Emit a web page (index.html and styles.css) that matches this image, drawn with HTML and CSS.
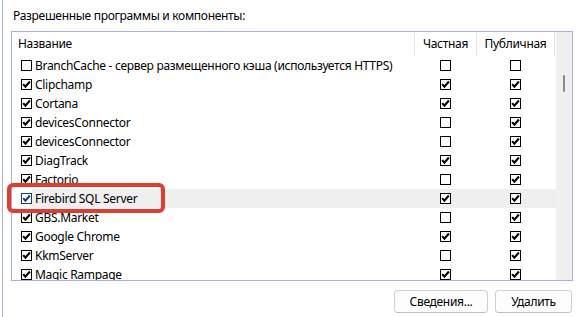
FILE: index.html
```html
<!DOCTYPE html>
<html lang="ru">
<head>
<meta charset="utf-8">
<title>Разрешенные программы</title>
<link rel="stylesheet" href="styles.css">
</head>
<body>
<svg class="defs" width="0" height="0" aria-hidden="true">
  <defs>
    <symbol id="box" viewBox="0 0 11 11">
      <rect x="0.5" y="0.5" width="10" height="10" fill="#fff" stroke="currentColor"/>
    </symbol>
    <symbol id="chk" viewBox="0 0 11 11">
      <rect x="0.5" y="0.5" width="10" height="10" fill="#fff" stroke="currentColor"/>
      <path d="M2.2 5.1 L4.4 7.7 L8.9 2.5" fill="none" stroke="currentColor" stroke-width="2.1" stroke-linejoin="miter"/>
    </symbol>
  </defs>
</svg>
<div class="panel">
  <div class="caption">Разрешенные программы и компоненты:</div>
  <div class="list">
    <div class="table">
      <div class="row head">
        <div class="hcell name">Название</div>
        <div class="hcell">Частная</div>
        <div class="hcell">Публичная</div>
        <div></div>
      </div>

      <div class="row">
        <div class="cell name"><svg class="cb"><use href="#box"/></svg><span class="label">BranchCache - сервер размещенного кэша (используется HTTPS)</span></div>
        <div class="cell mid"><svg class="cb"><use href="#box"/></svg></div>
        <div class="cell mid"><svg class="cb"><use href="#box"/></svg></div>
        <div></div>
      </div>
      <div class="row">
        <div class="cell name"><svg class="cb"><use href="#chk"/></svg><span class="label">Clipchamp</span></div>
        <div class="cell mid"><svg class="cb"><use href="#chk"/></svg></div>
        <div class="cell mid"><svg class="cb"><use href="#chk"/></svg></div>
        <div></div>
      </div>
      <div class="row">
        <div class="cell name"><svg class="cb"><use href="#chk"/></svg><span class="label">Cortana</span></div>
        <div class="cell mid"><svg class="cb"><use href="#chk"/></svg></div>
        <div class="cell mid"><svg class="cb"><use href="#chk"/></svg></div>
        <div></div>
      </div>
      <div class="row">
        <div class="cell name"><svg class="cb"><use href="#chk"/></svg><span class="label">devicesConnector</span></div>
        <div class="cell mid"><svg class="cb"><use href="#box"/></svg></div>
        <div class="cell mid"><svg class="cb"><use href="#chk"/></svg></div>
        <div></div>
      </div>
      <div class="row">
        <div class="cell name"><svg class="cb"><use href="#chk"/></svg><span class="label">devicesConnector</span></div>
        <div class="cell mid"><svg class="cb"><use href="#box"/></svg></div>
        <div class="cell mid"><svg class="cb"><use href="#chk"/></svg></div>
        <div></div>
      </div>
      <div class="row">
        <div class="cell name"><svg class="cb"><use href="#chk"/></svg><span class="label">DiagTrack</span></div>
        <div class="cell mid"><svg class="cb"><use href="#chk"/></svg></div>
        <div class="cell mid"><svg class="cb"><use href="#chk"/></svg></div>
        <div></div>
      </div>
      <div class="row">
        <div class="cell name"><svg class="cb"><use href="#chk"/></svg><span class="label">Factorio</span></div>
        <div class="cell mid"><svg class="cb"><use href="#box"/></svg></div>
        <div class="cell mid"><svg class="cb"><use href="#chk"/></svg></div>
        <div></div>
      </div>
      <div class="row selected">
        <div class="cell name"><svg class="cb focus"><use href="#chk"/></svg><span class="label">Firebird SQL Server</span></div>
        <div class="cell mid"><svg class="cb"><use href="#chk"/></svg></div>
        <div class="cell mid"><svg class="cb"><use href="#chk"/></svg></div>
        <div></div>
      </div>
      <div class="row">
        <div class="cell name"><svg class="cb"><use href="#chk"/></svg><span class="label">GBS.Market</span></div>
        <div class="cell mid"><svg class="cb"><use href="#box"/></svg></div>
        <div class="cell mid"><svg class="cb"><use href="#chk"/></svg></div>
        <div></div>
      </div>
      <div class="row">
        <div class="cell name"><svg class="cb"><use href="#chk"/></svg><span class="label">Google Chrome</span></div>
        <div class="cell mid"><svg class="cb"><use href="#chk"/></svg></div>
        <div class="cell mid"><svg class="cb"><use href="#chk"/></svg></div>
        <div></div>
      </div>
      <div class="row">
        <div class="cell name"><svg class="cb"><use href="#chk"/></svg><span class="label">KkmServer</span></div>
        <div class="cell mid"><svg class="cb"><use href="#box"/></svg></div>
        <div class="cell mid"><svg class="cb"><use href="#chk"/></svg></div>
        <div></div>
      </div>
      <div class="row">
        <div class="cell name"><svg class="cb"><use href="#chk"/></svg><span class="label">Magic Rampage</span></div>
        <div class="cell mid"><svg class="cb"><use href="#chk"/></svg></div>
        <div class="cell mid"><svg class="cb"><use href="#chk"/></svg></div>
        <div></div>
      </div>
    </div>
    <div class="scrollbar"><div class="thumb"></div></div>
  </div>
  <div class="buttons">
    <button class="btn details">Сведения...</button>
    <button class="btn remove">Удалить</button>
  </div>
  <div class="highlight"></div>
</div>
</body>
</html>
```

FILE: styles.css
```css
* { box-sizing: border-box; }
html, body { margin: 0; padding: 0; background: #fff; }
body {
  width: 578px;
  height: 317px;
  overflow: hidden;
  font-family: "Noto Sans", "Open Sans", sans-serif;
  font-size: 12px;
  letter-spacing: -0.3px;
  color: #000;
}
.defs { position: absolute; width: 0; height: 0; }
.panel {
  position: relative;
  margin-left: 2px;
  height: 317px;
  width: 571px;
  border-left: 1px solid #aab0dd;
  padding-left: 8px;
}
.caption {
  padding-top: 8px;
  height: 31px;
  line-height: 16px;
  padding-left: 2px;
}
.list {
  width: 562px;
  height: 250px;
  border: 1px solid #aab0dd;
  display: flex;
  overflow: hidden;
}
.table {
  flex: 1;
  display: flex;
  flex-direction: column;
}
.row {
  display: grid;
  grid-template-columns: 403px 62px 78px 1fr;
  height: 19px;
  flex: none;
}
.row.head { height: 24px; }
.hcell {
  border-right: 1px solid #e5e5e5;
  line-height: 23px;
  text-align: center;
}
.hcell.name { text-align: left; padding-left: 6px; }
.cell {
  display: flex;
  align-items: center;
  line-height: 18px;
}
.cell.name { padding-left: 9px; }
.cell.mid { justify-content: center; padding-right: 1px; }
.cb {
  width: 11px;
  height: 11px;
  flex: none;
  color: #000;
  display: block;
}
.cb.focus { color: #1b3f75; }
.label {
  flex: 1;
  padding-left: 3px;
  white-space: nowrap;
  overflow: hidden;
  height: 19px;
  line-height: 19px;
}
.row.selected .label,
.row.selected .cell.mid,
.row.selected > div:last-child { background: #efefef; }
.scrollbar {
  width: 16px;
  flex: none;
  background: #f0f0f0;
  position: relative;
}
.thumb {
  position: absolute;
  left: 7px;
  top: 43px;
  width: 2px;
  height: 17px;
  border-radius: 1px;
  background: #8a8a8a;
}
.buttons {
  width: 562px;
  display: flex;
  justify-content: flex-end;
  gap: 7px;
  margin-top: 9px;
  padding-right: 1px;
}
.btn {
  font: inherit;
  letter-spacing: -0.3px;
  color: #000;
  height: 23px;
  background: #fdfdfd;
  border: 1px solid #d0d0d0;
  border-bottom-color: #c0c0c0;
  border-radius: 4px;
  padding: 0;
  line-height: 20px;
}
.btn.details { width: 94px; }
.btn.remove { width: 77px; }
.highlight {
  position: absolute;
  left: 4px;
  top: 183px;
  width: 158px;
  height: 30px;
  border: 4px solid #e23b2f;
  border-radius: 6px;
}
```
